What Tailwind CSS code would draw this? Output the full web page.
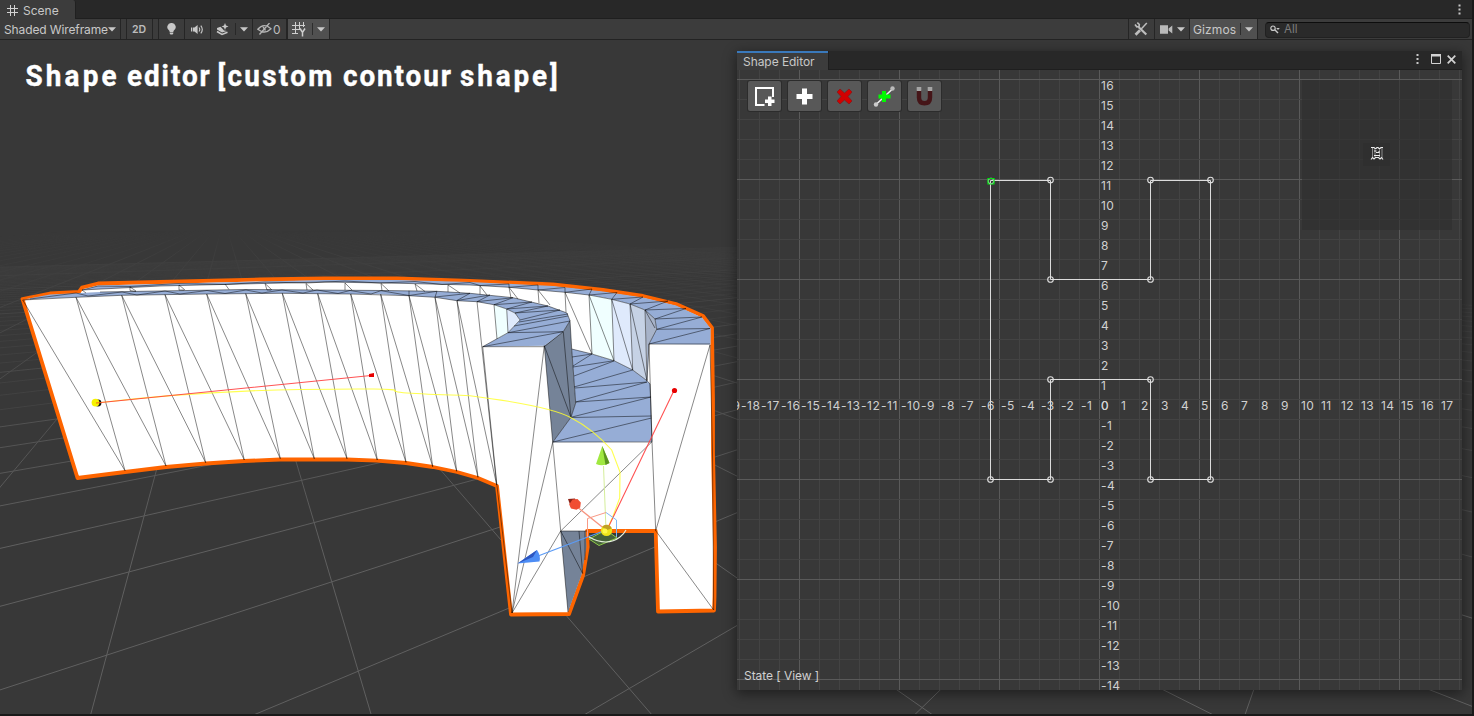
<!DOCTYPE html>
<html lang="en">
<head>
<meta charset="utf-8">
<title>Scene</title>
<script src="https://cdn.jsdelivr.net/npm/@tailwindcss/browser@4"></script>
</head>
<body class="w-[1474px] h-[716px] overflow-hidden bg-[#191919] text-[#c8c8c8] font-['Inter',sans-serif] text-[12px]">
<div class="relative flex h-[716px] w-[1474px] flex-col">
  <!-- tab strip -->
  <div class="flex h-[19px] w-[1472px] shrink-0 items-stretch bg-[#282828]">
    <div class="flex w-[76px] items-center gap-[5px] rounded-tr-[3px] border-r border-[#202020] bg-[#3c3c3c] pl-[7px] pt-[2px]">
      <svg class="h-[11px] w-[11px]" viewBox="0 0 11 11" stroke="#d2d2d2" fill="none"><path d="M3.5 0V11M7.5 0V11M0 3.5H11M0 7.5H11"/></svg>
      <span class="text-[12px]">Scene</span>
    </div>
    <div class="flex flex-1 items-center justify-end border-b border-[#1f1f1f] pr-[11px]">
      <svg class="h-[11px] w-[3px]" viewBox="0 0 3 11" fill="#c8c8c8"><path d="M.5 .5h2v2h-2zM.5 4.5h2v2h-2zM.5 8.5h2v2h-2z"/></svg>
    </div>
  </div>
  <!-- scene toolbar -->
  <div class="flex h-[21px] w-[1472px] shrink-0 items-stretch border-b border-[#232323] bg-[#3c3c3c]">
    <div class="flex w-[121px] items-center border-r border-[#252525] pl-[4px]">
      <span class="w-[104px] whitespace-nowrap pt-px text-[12px] tracking-[-0.12px]">Shaded Wireframe</span>
      <svg class="h-[5px] w-[8px]" viewBox="0 0 8 5" fill="#c8c8c8"><path d="M0 .3H8L4 4.6z"/></svg>
    </div>
    <div class="w-[6px] border-r border-[#252525]"></div>
    <div class="flex w-[26px] items-center justify-center border-r border-[#252525] pr-px pt-px text-[10.5px] font-semibold text-[#bcbcbc]">2D</div>
    <div class="w-[6px] border-r border-[#252525]"></div>
    <div class="flex w-[26px] items-center justify-center border-r border-[#252525] pr-px">
      <svg class="h-[12px] w-[9px]" viewBox="0 0 9 12" fill="#c8c8c8"><path d="M4.5 0a4 4 0 0 1 2.6 7.2Q6.4 8 6.3 9H2.7Q2.600 8 1.900 7.200A4 4 0 0 1 4.500 0zM2.700 9.600h3.600v.8L5.500 11.600h-2l-.8-1.200z"/></svg>
    </div>
    <div class="flex w-[26px] items-center justify-center border-r border-[#252525]">
      <svg class="h-[11px] w-[13px]" viewBox="0 0 13 11"><path d="M0 3.500h1v4H0zM1.700 3.500H3.500L6.600 1v9L3.500 7.500H1.700z" fill="#c8c8c8"/><path d="M8 3.500q1.500 2 0 4M9.800 1.600q3 3.900 0 7.800" fill="none" stroke="#c8c8c8" stroke-width="1.100"/></svg>
    </div>
    <div class="flex w-[42px] items-center border-r border-[#252525]">
      <svg class="ml-[5px] h-[13px] w-[13px]" viewBox="0 0 13 13"><path d="M9 0l1 2.500L12.500 3.500 10 4.500 9 7 8 4.500 5.500 3.500 8 2.500zM1 5l3.500-1.200L6 5.200l2 2.300 3 .5L6 9.600 1 6.500z" fill="#c8c8c8"/><path d="M1 8.500L6 11.500l5.500-2.300" fill="none" stroke="#c8c8c8" stroke-width="1.500"/></svg>
      <div class="ml-[6px] h-[12px] w-px bg-[#282828]"></div>
      <svg class="ml-[4px] h-[5px] w-[8px]" viewBox="0 0 8 5" fill="#c8c8c8"><path d="M0 .3H8L4 4.600z"/></svg>
    </div>
    <div class="flex w-[35px] items-center gap-[1px] border-r-2 border-[#252525] pl-[4px]">
      <svg class="h-[12px] w-[15px]" viewBox="0 0 15 12" fill="none" stroke="#b4b4b4" stroke-width="1.300"><path d="M.8 6.300Q7-.8 14 5.800Q8 12 .8 6.300zM12.500 0L2.500 11.500"/><path d="M6 4l2.500 3.500"/></svg>
      <span class="pt-px text-[12px] text-[#bdbdbd]">0</span>
    </div>
    <div class="flex w-[42px] items-center border-r border-[#252525] bg-[#505050]">
      <svg class="ml-[4px] h-[15px] w-[15px]" viewBox="0 0 15 15" fill="none" stroke="#cfcfcf"><path d="M3.500 0V12M7.500 0V8M11.500 0V5M0 3.500H13M0 7.500H8M0 11.500H6" stroke-width="1"/><path d="M8 6.500l2.500 3.800L13 6.500M10.500 10v4.500" stroke-width="1.500"/></svg>
      <div class="ml-[5px] h-[12px] w-px bg-[#2d2d2d]"></div>
      <svg class="ml-[4px] h-[5px] w-[8px]" viewBox="0 0 8 5" fill="#c8c8c8"><path d="M0 .3H8L4 4.600z"/></svg>
    </div>
    <div class="flex-1 border-r border-[#252525]"></div>
    <div class="flex w-[26px] items-center justify-center border-r border-[#252525] pr-[2px]">
      <svg class="h-[14px] w-[14px]" viewBox="0 0 14 14" stroke="#bdbdbd" fill="none"><path d="M4.500 5L12.300 12.500" stroke-width="2.200"/><path d="M1 2.500l1.800 2.300 2.200-.3.300-2L3.300.7" stroke-width="1.600"/><path d="M1.500 12.700L6 8.300" stroke-width="2.600"/><path d="M7 7.200L12.800 1" stroke-width="1.500"/></svg>
    </div>
    <div class="flex w-[35px] items-center border-r border-[#252525]">
      <svg class="ml-[5px] h-[9px] w-[13px]" viewBox="0 0 13 9" fill="#b9b9b9"><path d="M0 .3h8v8.400H0zM8.600 3.500L12.300.5v8L8.600 5.500z"/></svg>
      <svg class="ml-[4px] h-[5px] w-[8px]" viewBox="0 0 8 5" fill="#c8c8c8"><path d="M0 .3H8L4 4.600z"/></svg>
    </div>
    <div class="flex w-[68px] items-center border-r border-[#252525] bg-[#505050] pl-[3px]">
      <span class="w-[43px] pt-px text-[12px] tracking-[0.1px]">Gizmos</span>
      <div class="ml-[4px] h-[12px] w-px bg-[#2d2d2d]"></div>
      <svg class="ml-[4px] h-[5px] w-[8px]" viewBox="0 0 8 5" fill="#c8c8c8"><path d="M0 .3H8L4 4.600z"/></svg>
    </div>
    <div class="flex w-[214px] items-center pl-[7px] pt-px">
      <div class="flex h-[16px] w-[205px] items-center gap-[4px] rounded-[4px] border border-[#212121] border-t-[#0d0d0d] bg-[#2a2a2a] pl-[4px]">
        <svg class="h-[9px] w-[10px]" viewBox="0 0 10 9"><path d="M4.800 4.800L8 8" stroke="#c8c8c8" stroke-width="1.400"/><circle cx="3" cy="3.200" r="2.200" fill="none" stroke="#c8c8c8" stroke-width="1.200"/><path d="M6.200 3h3.600L8 5z" fill="#c8c8c8"/></svg>
        <span class="text-[11.500px] text-[#7d7d7d]">All</span>
      </div>
    </div>
  </div>
  <!-- 3D viewport -->
  <div class="relative h-[674px] w-[1472px] shrink-0 overflow-hidden bg-[#383838]">
    <svg class="block h-[674px] w-[1472px]" viewBox="0 40 1472 674">
      <defs>
        <linearGradient id="fade" x1="0" y1="230" x2="0" y2="540" gradientUnits="userSpaceOnUse">
          <stop offset="0" stop-color="#000"/><stop offset=".1" stop-color="#303030"/><stop offset=".5" stop-color="#888"/><stop offset="1" stop-color="#fff"/>
        </linearGradient>
        <mask id="m" maskUnits="userSpaceOnUse" x="0" y="200" width="1474" height="516"><rect x="0" y="200" width="1474" height="516" fill="url(#fade)"/></mask>
      </defs>
      <g id="ground" mask="url(#m)" stroke="#606060" stroke-width="1"></g>
      <g font-family="Roboto" font-weight="700" font-size="30" fill="#fff" stroke="#fff" stroke-width=".4">
        <text transform="translate(25.500 86) scale(.93 1)" textLength="98" lengthAdjust="spacing">Shape</text>
        <text transform="translate(127 86) scale(.93 1)" textLength="89" lengthAdjust="spacing">editor</text>
        <text transform="translate(217.500 86) scale(.93 1)" textLength="123.500" lengthAdjust="spacing">[custom</text>
        <text transform="translate(343 86) scale(.93 1)" textLength="116" lengthAdjust="spacing">contour</text>
        <text transform="translate(460 86) scale(.93 1)" textLength="105" lengthAdjust="spacing">shape]</text>
      </g>
      <!-- silhouette -->
      <path d="M22.500 299L50 293.500 79 291.800 82 287.500 98 283.500 160 282 260 279.500 325 278.500 397 278.500 470 280.800 553 284.500 603 290 643 296 676 304 703 316 712 328 713 400 713 453 715 547 714.500 597 714 610.500 658 611.500 655.700 531 587 531 587.700 547 583 575.700 569 614 511 614.500 497 486 478 478 457 472 433 467 406 463 377 460.700 347 459.500 314 459.500 280 459.500 244 461 206 463.500 166 467 125 472 77.500 478z" fill="#fff" stroke="#fe6500" stroke-width="3.800" stroke-linejoin="round"/>
      <g fill="#96add6">
        <path d="M82 290L98 285.500 260 281.500 325 280 397 280 470 282 553 286 603 291.500 643 297.500 676 305.500 702 317.500 710.700 328.500 710.500 344.500 649 344 656.700 329.300 655 319 645 310 630 304 611.700 299.300 589 295 565 292.300 538 290 509 287.300 470 285 400 283.300 325 282 250 283.800 160 286z"/>
        <path d="M23.500 299.500L50 294.500 100 292 245 289.500 383 290.500 437 291.300 470 293.300 513 297.700 548 306 567 313 570 320.700 563.300 331.700 544.300 345.700 482.700 346.700 508 332.700 520 320 515 313 506.700 309 494 304.700 477 301.700 457 300.700 435 297.300 409 295.700 381 294.300 350 294 282 293.300 207 294 122 295.300 76 297.300z"/>
        <path d="M571.700 349L592 354 614 360.700 632.700 370 647 380.700 650 384 652 441.700 552.700 442.300 571 417.300 575.700 403z"/>
      </g>
      <path d="M589 295L611.700 299.300 614 360.700 592 354zM494 304.700L506.700 309 508 332.700 497 339z" fill="#f0ffff"/>
      <path d="M611.700 299.300L630 304 632.700 370 614 360.700zM506.700 309L515 313 520 320 508 332.700z" fill="#dfeafc"/>
      <path d="M630 304L645 310 647 380.700 632.700 370z" fill="#c6d2e5"/>
      <path d="M645 310L655 319 656.700 329.300 649 344 647.500 380z" fill="#a7b3c9"/>
      <path d="M544.300 345.700L563.300 331.700 570 320.700 571.700 349 575.700 403 571 417.300 552.700 442.300zM560.700 531H585.500L586.500 547 581.500 575 568 612z" fill="#758398"/>
      <g fill="none" stroke="#000" stroke-opacity=".52" stroke-width=".9">
        <!-- long wall triangles -->
        <path d="M22.700 300L125 470.700 76 297.300 166 466 121.700 295.300 205.700 462.700 165 294.700 244.300 460 206.700 294 280.300 458.700 245.700 293.700 314.300 458.700 282.300 293.300 347 458.700 317.700 293.700 377.300 460 350.700 294 406 462.300 380.700 294.300 432.700 466.700 409 295.700 456.700 471.300 435 297.300 478 477.300 457 300.700 496.700 485 477 301.700"/>
        <path d="M22.700 300L76 297.300 122 295.300 207 294 282 293.300 350 294 409 295.700 435 297.300 457 300.700 477 301.700 494 304.700 506.700 309 515 313 520 320 508 332.700 482.700 346.700H544.300L563.300 331.700 570 320.700 567 313 548 306 513 297.700 470 293.300 437 291.300 383 290.500 245 289.500 100 292"/>
        <path d="M30 299L76 293 88 296 122 292 137 295 165 291 180 294 207 290.500 225 293.500 246 290 262 293 282 290 303 293 317 290 338 293.500 350 290.500 371 294 381 290.700 409 295.500V290.700M409 295.500L437 291.300M435 297L437 291.300M435 297L470 293.300M457 300.500L470 293.300M457 300.500L490 295M477 301.700L490 295M477 301.700L513 297.700M494 304.700L513 297.700M494 304.700L532 302M506.700 309L532 302M506.700 309L548 306M515 313L548 306M515 313L560 310M520 320L560 310M519 322L568 314M514 326L568 316M508 332.700L570 321M508 332.700L563 331.700M482.700 346.700L563 331.700M494 304.700L497 339M506.700 309L508 332.700"/>
        <!-- rear rim -->
        <path d="M82 290L160 286 250 283.800 325 282 400 283.300 470 285 509 287.300 538 290 565 292.300 589 295 611.700 299.300 630 304 645 310 655 319 656.700 329.300 649 344H710"/>
        <path d="M82 290L98 286 130 286.500 178 283.500 225 284.500 265 282 307 283 345 281 380 283 415 281.500 442 284.500 470 282.500 480 285.500 509 284 509 287.300 538 285 538 290 565 287.500 565 292.300 592 289 589 295 617 292.500 611.700 299.300 643 297 630 304 668 301 645 310 686 308.500 655 319 702 317 656.700 329.300 710 328.500M649 344L710 328.500"/>
        <path d="M82 290L86 293M130 286.500V290.500L136 291.500M130 287L136 291M179 285V290L184 290M179 285L185 290M225 284L229 289.500M265 283.500L267 290 271 290M265 283.500L272 290M306 283.500L307 290M306 283.500L313 290M345 283V290M345 283L352 290M381 283.500L382 290.500M381 283.500L389 291M415 284L417 291M415 284L425 291.500M448 285V292M448 285L460 293M480 286V294.500M480 286L487 295M509 287.300L511 298M509 287.300L518 299M538 290L539 303M538 290L550 305M565 292.300L566 312M565 292.300L592 354 589 295 614 360.700 611.700 299.300 632.700 370 630 304 647 380.700 645 310"/>
        <path d="M647 380.700L649 344M645 310L655 328"/>
        <!-- channel floor -->
        <path d="M571.700 349L592 354 614 360.700 632.700 370 647 380.700 650 384 652 441.700M572 357L592 354M573 366L592 354M573 367L614 360.700M574 376L614 361M574 387L632.700 370M575 388L647 382M575.700 402L647 382M575.700 402L651 397M572 417L651 397M571 417.500L651.500 416M553 442L651.500 418M552.700 442H652"/>
        <!-- pillars -->
        <path d="M544.300 345.700L552.700 442.300 571 417.300 544.300 345.700M563.300 331.700L571 417.300 575.700 403 571.700 349 570 320.700M482.700 346.700L497 486 512 613M544.300 345.700L512 613 552.700 442.300 560.700 531 512 613M560.700 531L568 612M560.700 531L652 441.700 655.700 530.700 710 345 712.500 453 713.700 610 655.700 530.700M649 344L652 441.700M560.700 531H587M560.700 531L582.700 573.500 579 531M585 531L585 560"/>
      </g>
      <!-- spline and handles -->
      <path d="M96 403Q200 391 300 389.500T395 390.700T470 395.700Q550 406 571 417.700Q593 429 611.700 450L620 472 619.700 498 612.700 517 606.700 530" fill="none" stroke="#ffff30" stroke-width="1.100" opacity=".85"/>
      <path d="M96 403L371 375.500M607 530L674 390.500" stroke="#ff4040" stroke-width="1.100" opacity=".9"/>
      <circle cx="98" cy="403" r="3.400" fill="#111"/><circle cx="95.500" cy="402.600" r="3.900" fill="#f7f300"/><path d="M96 403L102 402.500" stroke="#f06020"/>
      <path d="M369 374l5-1v4h-5z" fill="#e80000"/><circle cx="674.500" cy="390.500" r="2.600" fill="#e80000"/>
      <!-- transform gizmo -->
      <path d="M589 539L606 530 617 538 599 545.500z" fill="#46623a" stroke="#8ecb4a" stroke-width="1"/>
      <path d="M606 530L603.500 466" stroke="#d5ee9b"/>
      <path d="M606 530L576 506" stroke="#f7937f" stroke-width="1.300"/>
      <path d="M606 530L538 556" stroke="#5c9bf5" stroke-width="1.300"/>
      <path d="M587.500 537V518.500L606 512.500" fill="none" stroke="#f89a86"/>
      <path d="M606 512.500L616.500 520V537" fill="none" stroke="#80b8f5"/>
      <path d="M589 537Q607 547 620 537Q624 534 626 530" fill="none" stroke="#e8f2e0" stroke-width="1.100"/>
      <path d="M602.300 446L609.500 463Q603 467 596 464z" fill="#a0e840"/><path d="M602.300 446L609.500 463 605.500 465z" fill="#5c941f"/>
      <path d="M568 499l7-.5 2 5-6 4z" fill="#8d2418"/><path d="M572.500 499.500l5-.5 3.300 3.500-.6 5-3.700 2.300-5.500-1.300-1.800-4z" fill="#f04d32"/>
      <path d="M517.500 563.500L537 550Q541 556 539.500 561.500z" fill="#4d8df5"/><path d="M517.500 563.500L537 550 533 557z" fill="#2d55c0"/>
      <circle cx="606.500" cy="530.500" r="5.600" fill="#eee51a"/><path d="M602 527a5.600 5.600 0 0 1 9.800 1.500L607 530z" fill="#c29f22"/><circle cx="605" cy="531" r="2.500" fill="#fff94a"/>
    </svg>

    <!-- floating Shape Editor window -->
    <div class="absolute left-[737px] top-[11px] flex h-[639px] w-[725px] flex-col bg-[#383838] shadow-[0_3px_12px_1px_rgba(0,0,0,0.45)]">
      <div class="flex h-[19px] shrink-0 items-stretch bg-[#282828]">
        <div class="flex w-[91px] items-center border-t-2 border-[#3a79bb] bg-[#3c3c3c] pl-[6px] pt-px text-[12px] tracking-[-0.06px]"><span class="whitespace-nowrap">Shape Editor</span></div>
        <div class="flex flex-1 items-center justify-end border-b border-l border-[#1f1f1f] pb-[2px] pr-[6px]">
          <svg class="mr-[12px] h-[10px] w-[3px]" viewBox="0 0 3 10" fill="#c8c8c8"><path d="M.5 0h2v2h-2zM.5 4h2v2h-2zM.5 8h2v2h-2z"/></svg>
          <svg class="mr-[6px] h-[10px] w-[10px]" viewBox="0 0 10 10"><path d="M.5.500h9v9h-9z" fill="none" stroke="#d2d2d2"/><path d="M0 0h10v2.500H0z" fill="#d2d2d2"/></svg>
          <svg class="h-[9px] w-[9px]" viewBox="0 0 9 9" stroke="#d2d2d2" stroke-width="1.700"><path d="M.7.700L8.300 8.300M8.300.700L.7 8.300"/></svg>
        </div>
      </div>
      <div class="relative h-[620px] overflow-hidden">
        <svg class="block h-[620px] w-[725px]" viewBox="737 70 725 620">
          <g id="grid" shape-rendering="crispEdges"></g>
          <path d="M1302 80h150v150h-150z" fill="#2f2f2f" fill-opacity=".62"/><path d="M1363 143h27v23h-27z" fill="#2e2e2e" fill-opacity=".7"/>
          <g id="axis" font-family="Inter" font-size="12" fill="#d0d0d0"></g>
          <path d="M990.500 180.500H1050.500V279.500H1150.500V180.500H1210.500V479.500H1150.500V379.500H1050.500V479.500H990.500z" fill="none" stroke="#dcdcdc" stroke-width="1"/>
          <g id="pts" fill="none" stroke="#e0e0e0" stroke-width="1.100"></g>
          <path d="M988 178.500h6v5.500h-6z" fill="none" stroke="#00e010" stroke-width="1.200"/>
          <!-- miniature of the outline -->
          <g fill="none" stroke="#ededed"><path d="M1372.500 148V158M1382 148V158M1375 149V157M1379.500 149V157" stroke-width=".7" opacity=".7"/><path d="M1371 147.500h3l1 1h1l1-1h1l1 1h1l1-1h2M1371 159.500l1.500-2 1.500 1.500 1.500-1.500h3l1.500 1.500 1.500-1.500 1.500 2M1374 151h2.500M1379 151v1.500h-3M1374 155.500h6" stroke-width="1.100"/></g>
        </svg>
        <div class="absolute left-[11px] top-[11px] flex gap-[7px]">
          <div class="h-[30px] w-[33px] rounded-[2px] bg-[#585858] shadow-[0_0_0_1px_#2c2c2c]"><svg class="h-[30px] w-[33px]" viewBox="0 0 33 30"><path d="M16.500 24H8V7H25V16" fill="none" stroke="#fff" stroke-width="2"/><path d="M20 15.500h3.500v3h3v3.500h-3v3H20v-3h-3v-3.500h3z" fill="#fff"/></svg></div>
          <div class="h-[30px] w-[33px] rounded-[2px] bg-[#585858] shadow-[0_0_0_1px_#2c2c2c]"><svg class="h-[30px] w-[33px]" viewBox="0 0 33 30"><path d="M14 7.500h5v5.500h5.500v5H19V23.500H14V18H8.500V13H14z" fill="#fff"/></svg></div>
          <div class="h-[30px] w-[33px] rounded-[2px] bg-[#585858] shadow-[0_0_0_1px_#2c2c2c]"><svg class="h-[30px] w-[33px]" viewBox="0 0 33 30"><path d="M12 8L16.500 12 21 8 24 11 20 15.500 24 20 21 23 16.500 19 12 23 9 20 13 15.500 9 11z" fill="#d20000" stroke="#85191a" stroke-width=".8"/></svg></div>
          <div class="h-[30px] w-[33px] rounded-[2px] bg-[#585858] shadow-[0_0_0_1px_#2c2c2c]"><svg class="h-[30px] w-[33px]" viewBox="0 0 33 30"><path d="M8 23.500L25 7.500" stroke="#eee" stroke-width="1.700"/><circle cx="8" cy="23.500" r="2.200" fill="#ccc"/><circle cx="24.500" cy="7.500" r="2.200" fill="#bbb"/><path d="M14 10h4v3.500h4.500v4H18V21H14V17.500H10.500v-4H14z" fill="#00fb00"/></svg></div>
          <div class="h-[30px] w-[33px] rounded-[2px] bg-[#585858] shadow-[0_0_0_1px_#2c2c2c]"><svg class="h-[30px] w-[33px]" viewBox="0 0 33 30"><path d="M11 9V16.500Q11 22.300 16.500 22.300T22 16.500V9" fill="none" stroke="#451518" stroke-width="4.400"/><path d="M8.700 6h4.600v4H8.700zM19.700 6h4.600v4h-4.600z" fill="#a5a5a5"/></svg></div>
        </div>
        <span class="absolute bottom-[5px] left-[7px] whitespace-nowrap text-[12px] leading-[18px] tracking-[-0.05px] text-[#d0d0d0]">State [ View ]</span>
      </div>
    </div>
  </div>
</div>
<script>
const NS = 'http://www.w3.org/2000/svg';
function add(parent, tag, attrs, text) {
  const e = document.createElementNS(NS, tag);
  for (const k in attrs) e.setAttribute(k, attrs[k]);
  if (text !== undefined) e.textContent = text;
  document.getElementById(parent).appendChild(e);
}
// ground plane: two families of lines running to their vanishing points
for (let k = 0; k < 55; k++) {
  const inv = 0.35 + 0.68 * k;
  const o = k < 11 ? 1 : (k % 10 === 4 ? 0.9 : 0.45);
  add('ground', 'line', {x1: 1415, y1: 229, x2: 1415 - 500 * inv, y2: 729, opacity: o});
}
for (let k = -22; k < 26; k++) {
  const s = 0.297 + 0.566 * k;
  add('ground', 'line', {x1: 224, y1: 219, x2: 224 + 520 * s, y2: 739, opacity: Math.abs(k) < 6 ? 1 : 0.5});
}
// editor grid, every fifth line brighter
for (let x = 739; x < 1462; x += 20)
  add('grid', 'rect', {x: x, y: 70, width: 1, height: 620, fill: (x - 799) % 100 === 0 ? '#5a5a5a' : '#434343'});
for (let y = 79; y < 690; y += 20)
  add('grid', 'rect', {x: 737, y: y, width: 725, height: 1, fill: (y - 79) % 100 === 0 ? '#5a5a5a' : '#434343'});
for (let n = -19; n <= 17; n++)
  add('axis', 'text', {x: 1101 + 20 * n, y: 410, 'letter-spacing': n < -9 ? 0.55 : 0.4}, n);
for (let n = -14; n <= 16; n++) add('axis', 'text', {x: 1101, y: 410 - 20 * n, 'letter-spacing': 0.4}, n);
for (const [x, y] of [[991,181],[1050.5,180],[1050.5,279.5],[1150.5,279.5],[1150.5,180],[1210.5,180],[1210.5,479.5],[1150.5,479.5],[1150.5,379.5],[1050.5,379.5],[1050.5,479.5],[990.5,479.5]])
  add('pts', 'circle', {cx: x, cy: y, r: 2.8});
</script>
</body>
</html>
